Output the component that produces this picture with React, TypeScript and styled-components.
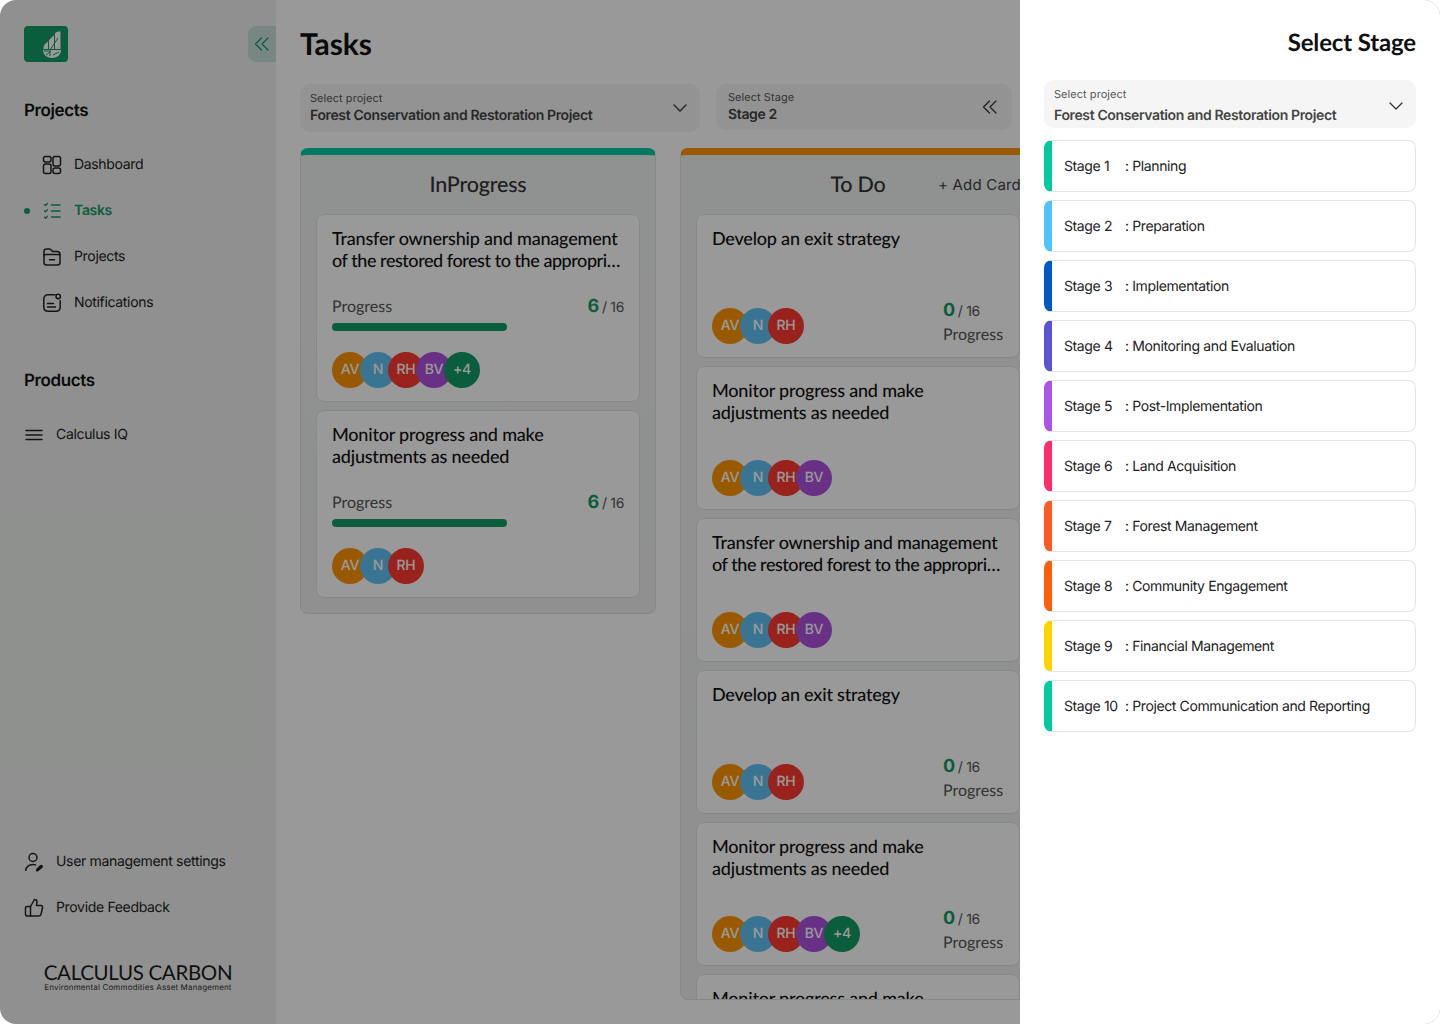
import React from "react";
import styled, { createGlobalStyle } from "styled-components";

const Global = createGlobalStyle`
  html, body { margin: 0; padding: 0; background: #fff; }
  body { font-family: "Inter", "Liberation Sans", sans-serif; color: #111; text-rendering: geometricPrecision; }
  * { box-sizing: border-box; }
`;
const heading = `"Lato", "Open Sans", sans-serif`;

const Page = styled.div`
  position: relative; width: 1440px; height: 1024px; overflow: hidden;
  border-radius: 16px; display: flex; background: #fff;
`;
const Sidebar = styled.aside`
  width: 276px; flex: none; height: 100%; background: #eef1ef;
  display: flex; flex-direction: column; padding: 26px 0 0 24px;
`;
const SideTop = styled.div`display: flex; justify-content: space-between; align-items: flex-start;`;
const LogoBox = styled.div`
  width: 44px; height: 36px; background: #119c66; border-radius: 4px;
  display: flex; align-items: center; justify-content: center;
`;
const Collapse = styled.div`
  width: 28px; height: 36px; background: #c8e2da; border-radius: 8px 0 0 8px;
  display: flex; align-items: center; justify-content: center; color: #119c66;
`;
const SideHeading = styled.h2<{ $top: number }>`
  font: 600 17px/22px "Inter", sans-serif; letter-spacing: -0.4px; margin: ${p => p.$top}px 0 0; color: #111;
`;
const NavList = styled.nav<{ $top: number }>`
  display: flex; flex-direction: column; gap: 18px; margin-top: ${p => p.$top}px;
`;
const NavRow = styled.div<{ $active?: boolean }>`
  position: relative; display: flex; align-items: center; gap: 12px; height: 28px; padding-left: 18px;
  font: ${p => (p.$active ? 600 : 400)} 14px/28px "Inter", sans-serif; letter-spacing: -0.33px;
  color: ${p => (p.$active ? "#119c66" : "#222")};
  svg { flex: none; }
`;
const Dot = styled.span`
  position: absolute; left: 0; top: 11px; width: 6px; height: 6px; border-radius: 50%; background: #119c66;
`;
const PlainRow = styled.div`
  display: flex; align-items: center; gap: 12px; height: 28px;
  font: 400 14px/28px "Inter", sans-serif; letter-spacing: -0.33px; color: #222;
`;
const Spacer = styled.div`flex: 1;`;
const FooterList = styled.div`display: flex; flex-direction: column; gap: 18px;`;
const Brand = styled.div`
  margin: 42px 0 32px 19px; display: flex; flex-direction: column; align-items: center; width: 190px;
`;
const BrandName = styled.div`
  font: 400 20.5px/18px ${heading}; letter-spacing: -0.32px; color: #1a1a1a; white-space: nowrap;
`;
const BrandTag = styled.div`
  font: 400 8px/10px "Inter", sans-serif; color: #333; white-space: nowrap; letter-spacing: 0.15px;
`;

const Main = styled.main`
  flex: 1; min-width: 0; height: 100%; padding: 0 0 0 24px; display: flex; flex-direction: column; overflow: hidden;
`;
const Title = styled.h1`
  font: 700 30px/36px ${heading}; letter-spacing: -0.1px; margin: 26px 0 0; color: #111;
`;
const Filters = styled.div`display: flex; gap: 16px; margin-top: 22px; align-items: flex-start;`;
const Select = styled.div<{ $w: number; $h: number; $left?: number; $right?: number }>`
  flex: none; width: ${p => p.$w}px; height: ${p => p.$h}px; background: #f5f5f5; border-radius: 10px;
  display: flex; align-items: center; justify-content: space-between;
  padding: 8px ${p => p.$right ?? 12}px 8px ${p => p.$left ?? 10}px; color: #333;
`;
const SelectLabel = styled.div`font: 400 11px/13px "Inter", sans-serif; color: #555; letter-spacing: 0.05px;`;
const SelectValue = styled.div<{ $gap?: number }>`
  font: 600 14px/18px "Inter", sans-serif; letter-spacing: -0.37px; color: #444; margin-top: ${p => p.$gap ?? 2}px;
`;
const Board = styled.div`
  display: flex; align-items: flex-start; gap: 24px; margin-top: 16px; width: 736px; height: 852px;
`;
const Column = styled.section<{ $bar: string; $fill?: boolean }>`
  flex: none; width: 356px; ${p => (p.$fill ? "height: 100%;" : "")} overflow: hidden;
  border: 1px solid #e0e3e1; border-top: 7px solid ${p => p.$bar}; border-radius: 8px;
  background: linear-gradient(180deg, #f1f3f2 0%, #eef1ef 100%);
  padding: 0 15px 15px;
`;
const ColHead = styled.div`
  display: grid; grid-template-columns: 1fr auto 1fr; align-items: center; height: 59px; padding-bottom: 1px;
`;
const ColTitle = styled.div`
  grid-column: 2; font: 500 21.5px/26px ${heading}; color: #333; letter-spacing: -0.2px;
`;
const AddCard = styled.div`
  grid-column: 3; justify-self: end; font: 400 15px/18px "Inter", sans-serif; color: #444; white-space: nowrap;
  margin: 2px -1px 0 0; letter-spacing: 0.2px;
`;
const Cards = styled.div`display: flex; flex-direction: column; gap: 8px;`;
const Card = styled.article`
  flex: none; background: #fff; border: 1px solid #e3e5e4; border-radius: 8px; padding: 12px 15px 13px;
`;
const CardTitle = styled.h3`
  font: 500 18px/22px ${heading}; letter-spacing: -0.2px; color: #111; margin: 0; height: 44px;
`;
const CardLine = styled.span<{ $tight?: boolean }>`
  display: block; white-space: nowrap; overflow: hidden; text-overflow: ellipsis;
  ${p => (p.$tight ? "letter-spacing: -0.45px;" : "")}
`;
const ProgressHead = styled.div`display: flex; justify-content: space-between; align-items: center; margin-top: 24px; height: 24px;`;
const ProgressLabel = styled.span`font: 400 16px/20px ${heading}; color: #555;`;
const Count = styled.span`font: 400 14px/20px "Inter", sans-serif; letter-spacing: -0.33px; color: #555;`;
const CountNum = styled.b`font: 700 18px/20px "Inter", sans-serif; color: #119c66; margin-right: 3px;`;
const Track = styled.div`height: 8px; margin-top: 4px; width: 292px;`;
const Fill = styled.div`height: 100%; border-radius: 4px; background: #119c66;`;
const Avatars = styled.div`display: flex; margin-top: 21px;`;
const Avatar = styled.span<{ $c: string }>`
  width: 36px; height: 36px; border-radius: 50%; background: ${p => p.$c}; color: #fff; flex: none;
  margin-right: -8px; display: flex; align-items: center; justify-content: center;
  font: 500 14px/16px "Inter", sans-serif; letter-spacing: -0.2px;
`;
const CardFoot = styled.div`display: flex; justify-content: space-between; align-items: flex-start; margin-top: 24px; height: 49px;`;
const FootAvatars = styled(Avatars)`margin: 13px 0 0;`;
const FootStat = styled.div`display: flex; flex-direction: column; width: 61px; gap: 3px; margin-top: 6px;`;

const Overlay = styled.div`position: absolute; inset: 0; background: rgba(0, 0, 0, 0.4);`;
const Drawer = styled.aside`
  position: absolute; top: 0; right: 0; bottom: 0; width: 420px; background: #fff;
  padding: 26px 24px; display: flex; flex-direction: column;
`;
const DrawerTitle = styled.h2`
  font: 700 24px/34px ${heading}; letter-spacing: -0.15px; color: #111; margin: 0; text-align: right;
`;
const DrawerSelect = styled(Select)`margin-top: 20px; svg { margin-top: 4px; }`;
const DrawerSelectBody = styled.div`align-self: flex-start;`;
const Stages = styled.div`display: flex; flex-direction: column; gap: 8px; margin-top: 12px;`;
const Stage = styled.div<{ $c: string }>`
  height: 52px; border: 1px solid #e3e5e4; border-left: 8px solid ${p => p.$c}; border-radius: 8px;
  display: flex; align-items: center; padding: 1px 0 0 12px; font: 400 14px/20px "Inter", sans-serif; letter-spacing: -0.38px; color: #222;
`;
const StageNo = styled.span`width: 61px; flex: none; white-space: pre;`;
const StageName = styled.span`white-space: pre;`;

const Stroke = { fill: "none", stroke: "currentColor", strokeWidth: 1.5, strokeLinecap: "round", strokeLinejoin: "round" } as const;

const Logo = () => (
  <svg width="44" height="36" viewBox="24 26 44 36">
    <path fill="#fff" d="M55 33.500c1.500-2 5-2.500 5.500-1.500V49H55zM49 40l5-4.800V49h-5zM43.500 48c0-2 1-3.500 1.500-4l3-2.500V49h-4.500z" />
    <path fill="#fff" d="M43 50h18c0 4-3 8-9 8s-9-4-9-8z" />
    <path stroke="#119c66" strokeWidth="1" fill="none" d="M46 55l4-3 M50 56v-5 M58 38l-8 12 M44 51h7 M53 55l6-3" />
  </svg>
);
const Chevrons = ({ size = 18 }: { size?: number }) => (
  <svg width={size} height={size} viewBox="0 0 18 18" {...Stroke} strokeWidth={1.3}>
    <path d="M8.500 3L2.500 9l6 6M15 3L9 9l6 6" />
  </svg>
);
const Chevron = () => (
  <svg width="16" height="16" viewBox="0 0 16 16" {...Stroke} strokeWidth={1.3}>
    <path d="M2 5l6 6 6-6" />
  </svg>
);
const DashIcon = () => (
  <svg width="20" height="20" viewBox="0 0 20 20" {...Stroke}>
    <rect x="1.500" y="1.500" width="7.500" height="5.500" rx="2" />
    <rect x="1.500" y="9" width="7.500" height="9.500" rx="2" />
    <rect x="11" y="1.500" width="7.500" height="9.500" rx="2" />
    <rect x="11" y="13" width="7.500" height="5.500" rx="2" />
  </svg>
);
const TasksIcon = () => (
  <svg width="20" height="20" viewBox="0 0 20 20" {...Stroke}>
    <path d="M9.500 4h8.500M9.500 10h8.500M9.500 16h8.500" />
    <path strokeWidth="1.300" d="M2.500 3.500l1 1 2-2M2.500 9.800l1 1 2-2M2.500 16.200l1 1 2-2" />
  </svg>
);
const FolderIcon = () => (
  <svg width="20" height="20" viewBox="0 0 20 20" {...Stroke}>
    <path d="M2 9V4.500C2 3 3 2 4.500 2h3c1 0 1.500.5 2 1.200L10.500 4.500H15c2 0 3 1.200 3 3V8" />
    <path d="M2 9c0-.8.700-1.500 1.500-1.500h13c.8 0 1.500.7 1.500 1.500v6.500c0 1.500-1 2.500-2.500 2.500h-11C3 18 2 17 2 15.500z" />
    <path d="M7.500 12.700h5" />
  </svg>
);
const BellIcon = () => (
  <svg width="20" height="20" viewBox="0 0 20 20" {...Stroke}>
    <path d="M13 1.800H6C3.500 1.800 1.800 3.500 1.800 6v8c0 2.500 1.700 4.200 4.200 4.200h8c2.500 0 4.200-1.700 4.200-4.200V7.500" />
    <circle cx="16.200" cy="3.500" r="2.200" />
    <path d="M5.500 10.500h6M5.500 14h8" />
  </svg>
);
const MenuIcon = () => (
  <svg width="20" height="20" viewBox="0 0 20 20" {...Stroke}>
    <path d="M2 5.500h16M2 10h16M2 14.500h16" />
  </svg>
);
const UserIcon = () => (
  <svg width="20" height="20" viewBox="0 0 20 20" {...Stroke}>
    <circle cx="9" cy="5.500" r="4" />
    <path d="M1.800 18.500c0-3.500 3.200-6 7.200-6 1 0 1.800.1 2.500.4" />
    <path fill="currentColor" d="M14 18.500l-1.300.2.200-1.500 3.600-3.400c.5-.4 1-.4 1.400 0 .4.400.4 1 0 1.400z" />
  </svg>
);
const ThumbIcon = () => (
  <svg width="20" height="20" viewBox="0 0 20 20" {...Stroke}>
    <path d="M6.500 8.500v9.500M6.500 8.500L10.500 1.500c1.500 0 2.500 1 2.500 2.500l-.5 3.500H17c1 0 1.800 1 1.500 2.200l-1.500 6.500c-.3 1-1.200 1.800-2.300 1.800H6.500" />
    <path d="M6.500 8.500H3c-.8 0-1.500.7-1.500 1.500v6.500c0 .8.7 1.500 1.500 1.500h3.500" />
  </svg>
);

const people: Record<string, string> = { AV: "#ff9500", N: "#5fc4f5", RH: "#ff3b30", BV: "#af52de", "+4": "#119c66" };
const AvatarRow = ({ names, foot }: { names: string[]; foot?: boolean }) => {
  const Row = foot ? FootAvatars : Avatars;
  return <Row>{names.map(n => <Avatar key={n} $c={people[n]}>{n}</Avatar>)}</Row>;
};

const T = ["Transfer ownership and management", "of the restored forest to the appropriate stakeholders"];
const M = ["Monitor progress and make", "adjustments as needed"];
const D = ["Develop an exit strategy"];
const three = ["AV", "N", "RH"];
const four = ["AV", "N", "RH", "BV"];
const five = ["AV", "N", "RH", "BV", "+4"];

const Lines = ({ lines }: { lines: string[] }) => (
  <CardTitle>{lines.map(l => <CardLine key={l} $tight={l.length > 40}>{l}</CardLine>)}</CardTitle>
);
const ProgressCard = ({ title, names }: { title: string[]; names: string[] }) => (
  <Card>
    <Lines lines={title} />
    <ProgressHead>
      <ProgressLabel>Progress</ProgressLabel>
      <Count><CountNum>6</CountNum>/ 16</Count>
    </ProgressHead>
    <Track><Fill style={{ width: `${(175 / 292) * 100}%` }} /></Track>
    <AvatarRow names={names} />
  </Card>
);
const TodoCard = ({ title, names, stat }: { title: string[]; names: string[]; stat?: boolean }) => (
  <Card>
    <Lines lines={title} />
    <CardFoot>
      <AvatarRow names={names} foot />
      {stat && (
        <FootStat>
          <Count><CountNum>0</CountNum>/ 16</Count>
          <ProgressLabel>Progress</ProgressLabel>
        </FootStat>
      )}
    </CardFoot>
  </Card>
);

const stages = [
  ["Stage 1", "Planning", "#00cba0"], ["Stage 2", "Preparation", "#4fc3ff"], ["Stage 3", "Implementation", "#0059c9"],
  ["Stage 4", "Monitoring and Evaluation", "#5a55d8"], ["Stage 5", "Post-Implementation", "#a855e8"],
  ["Stage 6", "Land Acquisition", "#ff2d6b"], ["Stage 7", "Forest Management", "#ff5a1f"],
  ["Stage 8", "Community Engagement", "#ff5f0a"], ["Stage 9", "Financial Management", "#ffd400"],
  ["Stage 10", "Project Communication and Reporting", "#00cba0"],
];

export default function App() {
  return (
    <Page>
      <Global />
      <Sidebar>
        <SideTop>
          <LogoBox><Logo /></LogoBox>
          <Collapse><Chevrons /></Collapse>
        </SideTop>
        <SideHeading $top={38}>Projects</SideHeading>
        <NavList $top={29}>
          <NavRow><DashIcon />Dashboard</NavRow>
          <NavRow $active><Dot /><TasksIcon />Tasks</NavRow>
          <NavRow><FolderIcon />Projects</NavRow>
          <NavRow><BellIcon />Notifications</NavRow>
        </NavList>
        <SideHeading $top={53}>Products</SideHeading>
        <NavList $top={29}>
          <PlainRow><MenuIcon />Calculus IQ</PlainRow>
        </NavList>
        <Spacer />
        <FooterList>
          <PlainRow><UserIcon />User management settings</PlainRow>
          <PlainRow><ThumbIcon />Provide Feedback</PlainRow>
        </FooterList>
        <Brand>
          <BrandName>CALCULUS CARBON</BrandName>
          <BrandTag>Environmental Commodities Asset Management</BrandTag>
        </Brand>
      </Sidebar>
      <Main>
        <Title>Tasks</Title>
        <Filters>
          <Select $w={400} $h={48}>
            <div>
              <SelectLabel>Select project</SelectLabel>
              <SelectValue>Forest Conservation and Restoration Project</SelectValue>
            </div>
            <Chevron />
          </Select>
          <Select $w={296} $h={46} $left={12} $right={13}>
            <div>
              <SelectLabel>Select Stage</SelectLabel>
              <SelectValue>Stage 2</SelectValue>
            </div>
            <Chevrons />
          </Select>
        </Filters>
        <Board>
          <Column $bar="#00cba0">
            <ColHead><ColTitle>InProgress</ColTitle></ColHead>
            <Cards>
              <ProgressCard title={T} names={five} />
              <ProgressCard title={M} names={three} />
            </Cards>
          </Column>
          <Column $bar="#ff9500" $fill>
            <ColHead><ColTitle>To Do</ColTitle><AddCard>+ Add Card</AddCard></ColHead>
            <Cards>
              <TodoCard title={D} names={three} stat />
              <TodoCard title={M} names={four} />
              <TodoCard title={T} names={four} />
              <TodoCard title={D} names={three} stat />
              <TodoCard title={M} names={five} stat />
              <TodoCard title={M} names={five} />
            </Cards>
          </Column>
        </Board>
      </Main>
      <Overlay />
      <Drawer>
        <DrawerTitle>Select Stage</DrawerTitle>
        <DrawerSelect $w={372} $h={48}>
          <DrawerSelectBody>
            <SelectLabel>Select project</SelectLabel>
            <SelectValue $gap={6}>Forest Conservation and Restoration Project</SelectValue>
          </DrawerSelectBody>
          <Chevron />
        </DrawerSelect>
        <Stages>
          {stages.map(([no, name, c]) => (
            <Stage key={no} $c={c}><StageNo>{no}</StageNo><StageName>: {name}</StageName></Stage>
          ))}
        </Stages>
      </Drawer>
    </Page>
  );
}
